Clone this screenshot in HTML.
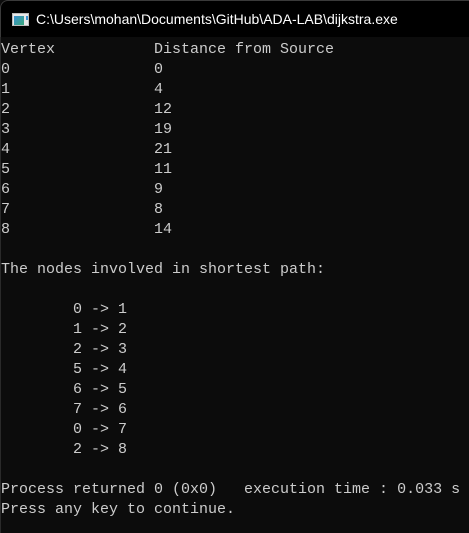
<!DOCTYPE html>
<html><head><style>
html,body{margin:0;padding:0;background:#0c0c0c;width:469px;height:533px;overflow:hidden}
.title{position:absolute;left:0;top:0;width:469px;height:37px;background:#000;border-top-left-radius:8px;border:1px solid #3a3a3a;border-right:none;border-bottom:none;box-sizing:border-box}
.icon{position:absolute;left:11px;top:12px;width:17px;height:13px;background:#e8e8e8;border:1px solid #bbb;box-sizing:border-box}
.icon i{position:absolute;left:1px;top:2px;width:10px;height:9px;background:linear-gradient(135deg,#3a8fd0,#3aa87a)}
.icon b{position:absolute;left:13px;top:2px;width:2px;height:4px;background:#3a8fd0}
.ttext{position:absolute;left:35px;top:10px;font:14px "Liberation Sans",sans-serif;color:#fff;white-space:pre}
pre{position:absolute;left:1px;top:40px;margin:0;font:15px/20px "Liberation Mono",monospace;color:#cccccc}
.side{position:absolute;left:0;top:37px;width:1px;height:496px;background:#2a2a2a}
</style></head><body>
<div class="title"><div class="icon"><i></i><b></b></div><div class="ttext">C:\Users\mohan\Documents\GitHub\ADA-LAB\dijkstra.exe</div></div>
<div class="side"></div>
<pre>Vertex           Distance from Source
0                0
1                4
2                12
3                19
4                21
5                11
6                9
7                8
8                14

The nodes involved in shortest path:

        0 -&gt; 1
        1 -&gt; 2
        2 -&gt; 3
        5 -&gt; 4
        6 -&gt; 5
        7 -&gt; 6
        0 -&gt; 7
        2 -&gt; 8

Process returned 0 (0x0)   execution time : 0.033 s
Press any key to continue.</pre>
</body></html>
